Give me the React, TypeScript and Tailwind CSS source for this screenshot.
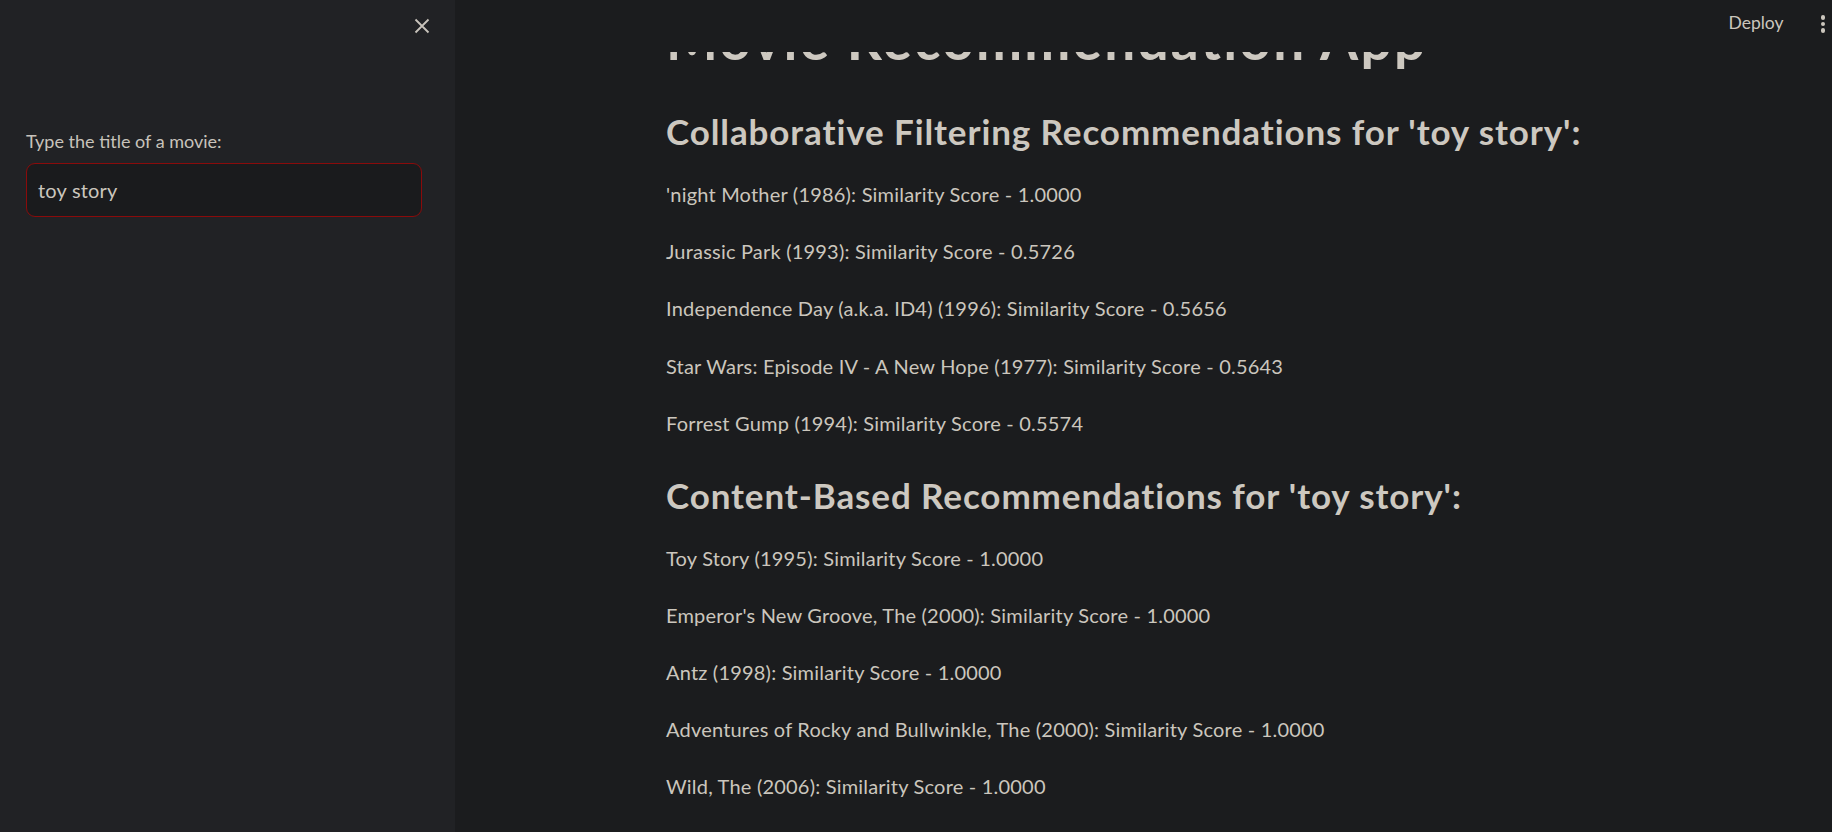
import React from 'react';

const collaborative = [
  "'night Mother (1986): Similarity Score - 1.0000",
  'Jurassic Park (1993): Similarity Score - 0.5726',
  'Independence Day (a.k.a. ID4) (1996): Similarity Score - 0.5656',
  'Star Wars: Episode IV - A New Hope (1977): Similarity Score - 0.5643',
  'Forrest Gump (1994): Similarity Score - 0.5574',
];

const contentBased = [
  'Toy Story (1995): Similarity Score - 1.0000',
  "Emperor's New Groove, The (2000): Similarity Score - 1.0000",
  'Antz (1998): Similarity Score - 1.0000',
  'Adventures of Rocky and Bullwinkle, The (2000): Similarity Score - 1.0000',
  'Wild, The (2006): Similarity Score - 1.0000',
];

const Sidebar = () => {
  return (
    <aside className="w-[455px] shrink-0 bg-[#212225] h-full">
      <div className="flex justify-end pt-[18px] pr-[25px]">
        <button className="w-[16px] h-[16px] text-[#c8c3bb]">
          <svg viewBox="0 0 16 16" width="16" height="16" fill="none" stroke="currentColor" strokeWidth="1.8">
            <path d="M1.5 1.5L14.5 14.5M14.5 1.5L1.5 14.5" />
          </svg>
        </button>
      </div>
      <div className="px-[26px] mt-[97px]">
        <label className="block text-[18px] leading-[20px] text-[#c8c3bb] mb-[12px]">Type the title of a movie:</label>
        <div className="h-[54px] w-[396px] rounded-[9px] border border-[#8a0b0b] bg-[#1a1b1d] flex items-center px-[11px]">
          <span className="text-[20px] tracking-[0.2px] text-[#cbc6bd]">toy story</span>
        </div>
      </div>
    </aside>
  );
};

const Item = ({ text }: { text: string }) => (
  <p className="text-[20px] tracking-[0.2px] leading-[57.2px] text-[#cbc6bd] whitespace-nowrap">{text}</p>
);

const Heading = ({ children, top }: { children: React.ReactNode; top: string }) => (
  <h3 className={`text-[35px] font-bold tracking-[0.9px] leading-[46px] text-[#cdc8c0] whitespace-nowrap pb-[12px] ${top}`}>
    {children}
  </h3>
);

export default function App() {
  return (
    <div className="flex h-[832px] w-full overflow-hidden font-['Lato',sans-serif] bg-[#1b1c1e]">
      <Sidebar />
      <main className="relative flex-1 h-full overflow-hidden bg-[#1b1c1e]">
        <div className="pl-[211px] pt-[9px]">
          <h1 className="text-[55px] font-bold tracking-[2.2px] leading-[60px] text-[#cdc8c0] mb-[39px] whitespace-nowrap">
            Movie Recommendation App
          </h1>
          <Heading top="pt-[0px]">Collaborative Filtering Recommendations for 'toy story':</Heading>
          {collaborative.map((t) => (
            <Item key={t} text={t} />
          ))}
          <Heading top="pt-[19.5px]">Content-Based Recommendations for 'toy story':</Heading>
          {contentBased.map((t) => (
            <Item key={t} text={t} />
          ))}
        </div>
        <header className="absolute top-0 left-0 right-0 h-[52px] bg-[#1b1c1e] flex items-start justify-end pr-[7px]">
          <span className="mt-[12.5px] text-[17.5px] leading-[20px] text-[#cbc6bd] mr-[37px]">Deploy</span>
          <div className="mt-[15px] flex flex-col gap-[2px]">
            <span className="w-[4.5px] h-[4.5px] rounded-full bg-[#cbc6bd]"></span>
            <span className="w-[4.5px] h-[4.5px] rounded-full bg-[#cbc6bd]"></span>
            <span className="w-[4.5px] h-[4.5px] rounded-full bg-[#cbc6bd]"></span>
          </div>
        </header>
      </main>
    </div>
  );
}
